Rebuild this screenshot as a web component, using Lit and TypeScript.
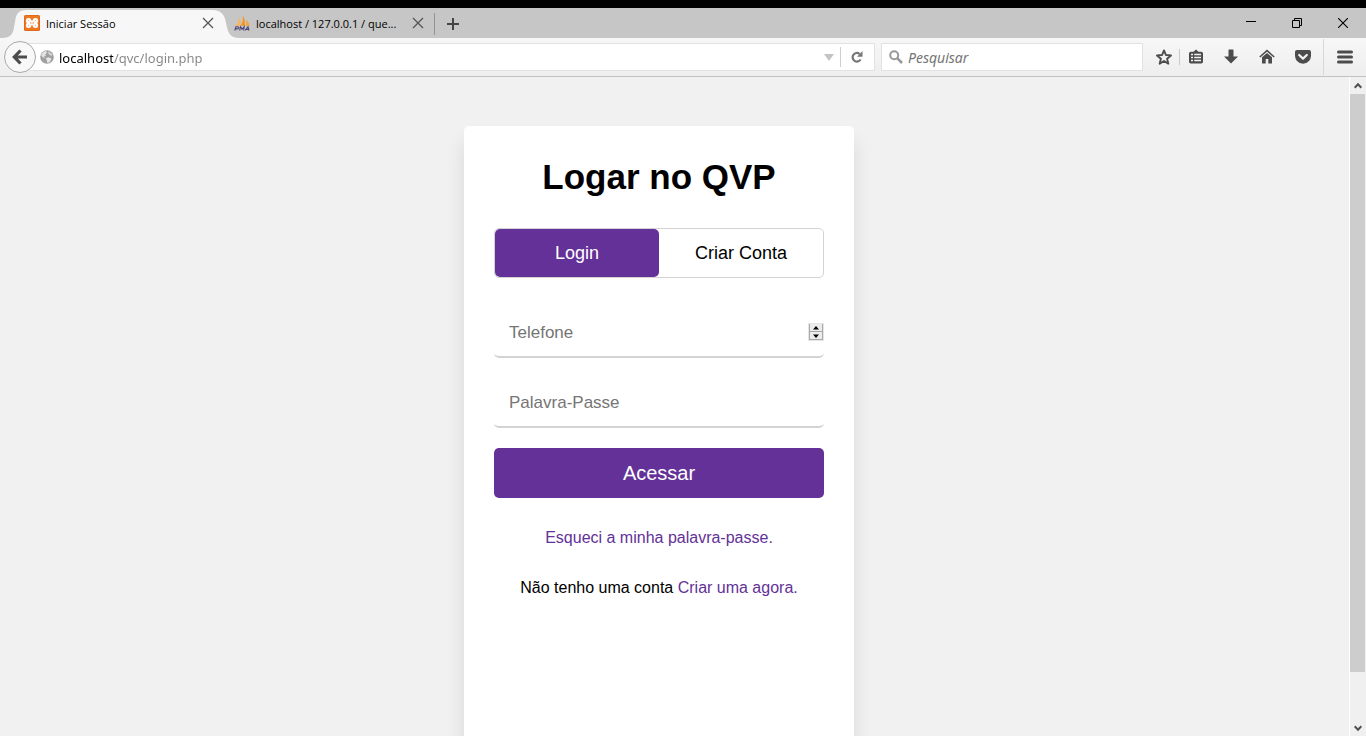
import { LitElement, html, css, svg } from "lit";
import { customElement, state, query } from "lit/decorators.js";

const closeIcon = html`<svg width="12" height="12" viewBox="0 0 12 12" aria-hidden="true">
  <path d="M1 1 11 11M11 1 1 11" fill="none" stroke="#555" stroke-width="1.3" />
</svg>`;

const xamppIcon = html`<svg width="16" height="16" viewBox="0 0 16 16" aria-hidden="true">
  <rect width="16" height="16" rx="1.500" fill="#e0691c" />
  <rect x="1" y="1" width="14" height="14" rx="1" fill="#f07820" />
  <path
    d="M5 7.300H4.600A1.600 1.600 0 1 1 6.200 5.500Q6.300 6.600 7.300 6.600H8.700Q9.700 6.600 9.800 5.500A1.600 1.600 0 1 1 11.400 7.300L11 8 11.400 8.700A1.600 1.600 0 1 1 9.800 10.500Q9.700 9.400 8.700 9.400H7.300Q6.300 9.400 6.200 10.500A1.600 1.600 0 1 1 4.600 8.700L5 8Z"
    fill="none"
    stroke="#fff"
    stroke-width="2.300"
    stroke-linejoin="round"
  />
</svg>`;

const pmaIcon = html`<svg width="16" height="16" viewBox="0 0 16 16" aria-hidden="true">
  <path d="M1.500 10.800Q5 7 6 1.500Q7 6 6.400 10.800Z" fill="#f9b45c" />
  <path d="M6.800 10.800Q9.500 6 9 .5Q11.500 5 11.200 10.800Z" fill="#f7941d" />
  <path d="M11.800 10.800Q12.800 7.500 12.200 4.500Q15 7.500 15.500 10.800Z" fill="#f9a33a" />
  <path
    d="M.8 15.500 1.900 11.700H3.800Q5.200 11.900 4.600 13.100Q4.200 13.900 3.200 13.900H1.500M5.600 15.500 6.600 11.700 8 14.200 10.200 11.700 9.600 15.500M11 15.500 14 11.700 15 15.500M12.200 14.400H14.600"
    fill="none"
    stroke="#4a4878"
    stroke-width="1.1"
  />
</svg>`;

const globeIcon = html`<svg width="14" height="14" viewBox="0 0 14 14" aria-hidden="true">
  <circle cx="7" cy="7" r="6.800" fill="#a0a0a0" />
  <path d="M2 3.200Q4 1 6.200 1L7 2.800 5.400 4.200 6 5.500 4.200 6.200 5 8 3.400 7.600 1.200 5.800Z" fill="#e2e2e2" />
  <path d="M8.500 1.200 12.300 4.200 11.500 6 9.200 4.800 8.200 3Z" fill="#d6d6d6" />
  <path d="M6 8 9 7.200 11.500 9 9.500 12.200 7.500 13 6.800 10.500Z" fill="#e6e6e6" />
</svg>`;

const tools = [
  {
    name: "Adicionar aos favoritos",
    icon: svg`<path d="M8 1.400 9.900 6 15 6.400 11.100 9.700 12.300 14.700 8 12 3.700 14.700 4.900 9.700 1 6.400 6.100 6Z" fill="none" stroke="#4c4c4c" stroke-width="1.900" stroke-linejoin="round"/>`,
  },
  {
    name: "Mostrar favoritos",
    icon: svg`<path d="M5.500 2.800 8 .6 10.500 2.800H13.200Q15 2.800 15 4.600V12.700Q15 14.500 13.200 14.500H2.800Q1 14.500 1 12.700V4.600Q1 2.800 2.800 2.800Z" fill="#4c4c4c"/>
      <path d="M3 5.500H5M6.200 5.500H13M3 8.500H5M6.200 8.500H13M3 11.500H5M6.200 11.500H13" stroke="#f3f3f3" stroke-width="1.600"/>`,
  },
  {
    name: "Transferências",
    icon: svg`<path d="M5.500 1Q5.500 .5 6 .5H10Q10.500 .5 10.500 1V7.500H15L8 14.500 1 7.500H5.500Z" fill="#4c4c4c"/>`,
  },
  {
    name: "Página inicial",
    icon: svg`<path d="M.8 8 8 1.600 15.200 8" fill="none" stroke="#4c4c4c" stroke-width="1.500"/>
      <path d="M3 8.300 8 4 13 8.300V14.500H9.300V10H6.700V14.500H3Z" fill="#4c4c4c"/>`,
  },
  {
    name: "Pocket",
    icon: svg`<path d="M2 1H14Q16 1 16 3V7Q15.500 14 8 14.700Q.5 14 0 7V3Q0 1 2 1Z" fill="#4c4c4c"/>
      <path d="M4.200 6 8 9.600 11.800 6" fill="none" stroke="#f3f3f3" stroke-width="2.200" stroke-linecap="round" stroke-linejoin="round"/>`,
  },
];

@customElement("browser-chrome")
class BrowserChrome extends LitElement {
  static styles = css`
    :host {
      display: block;
      font-family: "Noto Sans", "Open Sans", sans-serif;
      color: #000;
    }
    button {
      display: grid;
      place-items: center;
      box-sizing: border-box;
      margin: 0;
      padding: 0;
      border: 0;
      background: none;
      font: inherit;
    }
    .edge {
      height: 8px;
      background: #000;
    }
    .strip {
      display: flex;
      height: 30px;
      background: #c6c6c6;
    }
    .tab {
      display: flex;
      align-items: center;
      box-sizing: border-box;
      gap: 6px;
      font-family: "Open Sans", sans-serif;
      white-space: nowrap;
    }
    .title {
      flex: 1;
      min-width: 0;
      overflow: hidden;
      text-overflow: ellipsis;
      font-size: 11px;
    }
    .active {
      position: relative;
      width: 228px;
      padding: 0 14px 0 24px;
    }
    .shape {
      position: absolute;
      inset: 0;
      z-index: 0;
    }
    .active > :not(.shape) {
      position: relative;
    }
    .other {
      width: 206px;
      padding: 0 10px 0 6px;
    }
    .plus {
      width: 37px;
      margin: 5px 0 3px;
      border-left: 1px solid #939393;
    }
    .window {
      display: flex;
      margin-left: auto;
    }
    .window button {
      width: 46px;
    }
    .bar {
      display: flex;
      align-items: center;
      box-sizing: border-box;
      height: 39px;
      padding-left: 4px;
      border-bottom: 1px solid #c1c3c1;
      background: linear-gradient(#f7f7f7, #eeeeee);
    }
    .back {
      flex: none;
      width: 32px;
      height: 32px;
      border: 1px solid #a9a9a9;
      border-radius: 50%;
      background: #f8f8f8;
      z-index: 1;
    }
    .field {
      display: flex;
      align-items: center;
      box-sizing: border-box;
      height: 28px;
      border: 1px solid #e2e2e2;
      background: #fff;
    }
    .address {
      flex: 1;
      margin-left: -14px;
      padding-left: 17px;
    }
    .search {
      flex: 0 1 262px;
      margin: 0 10px 0 6px;
      padding-left: 7px;
    }
    input {
      flex: 1;
      min-width: 0;
      margin: 0 0 0 5px;
      padding: 2px 0 0;
      border: 0;
      outline: 0;
      background: none;
      font: 13px/20px "Noto Sans", sans-serif;
    }
    .url {
      color: #000;
      background: linear-gradient(90deg, #000 54px, #858585 54px);
      -webkit-background-clip: text;
      background-clip: text;
      -webkit-text-fill-color: transparent;
    }
    .search input {
      font-style: italic;
      font-size: 14px;
    }
    .search input::placeholder {
      color: #757575;
      opacity: 1;
    }
    .history {
      width: 22px;
    }
    .reload {
      width: 34px;
      height: 20px;
      padding-right: 2px;
      border-left: 1px solid #cfcfcf;
    }
    .tools {
      display: flex;
      align-items: center;
    }
    .tools button {
      width: 36px;
      height: 16px;
    }
    .tools .first {
      width: 27px;
      padding-right: 4px;
      border-right: 1px solid #cacaca;
    }
    .tools .second {
      width: 33px;
      padding-right: 2px;
    }
    .menu {
      width: 43px;
      height: 36px;
      margin-left: 2px;
      border-left: 1px solid #d8d8d8;
    }
  `;

  render() {
    return html`
      <div class="edge"></div>
      <div class="strip">
        <div class="tab active">
          <svg class="shape" width="248" height="30" viewBox="0 0 248 30" aria-hidden="true">
            <path d="M0 30C14 30 13 24 15 14C16 6 18 2 27 2H212C222 2 225 8 226 15C228 24 229 30 240 30Z" fill="#f7f7f7" />
          </svg>
          ${xamppIcon}
          <span class="title">Iniciar Sessão</span>
          <button aria-label="Fechar separador">${closeIcon}</button>
        </div>
        <div class="tab other">
          ${pmaIcon}
          <span class="title">localhost / 127.0.0.1 / que...</span>
          <button aria-label="Fechar separador">${closeIcon}</button>
        </div>
        <button class="plus" aria-label="Novo separador">
          <svg width="12" height="12" viewBox="0 0 12 12"><path d="M6 0V12M0 6H12" stroke="#444" stroke-width="2" /></svg>
        </button>
        <div class="window">
          <button aria-label="Minimizar">
            <svg width="10" height="10" viewBox="0 0 10 10"><path d="M0 3.500H10" stroke="#000" /></svg>
          </button>
          <button aria-label="Restaurar">
            <svg width="10" height="10" viewBox="0 0 10 10">
              <path d="M.5 2.500H7.500V9.500H.5ZM2.500 2.500V.5H9.500V7.500H7.500" fill="none" stroke="#000" />
            </svg>
          </button>
          <button aria-label="Fechar">
            <svg width="10" height="10" viewBox="0 0 10 10"><path d="M0 0 10 10M10 0 0 10" stroke="#000" stroke-width="1.100" /></svg>
          </button>
        </div>
      </div>
      <div class="bar">
        <button class="back" aria-label="Recuar">
          <svg width="16" height="16" viewBox="0 0 16 16">
            <path d="M8.500 1.500 2.300 8 8.500 14.500M2.500 8H15" fill="none" stroke="#4c4c4c" stroke-width="3.200" />
          </svg>
        </button>
        <div class="field address">
          ${globeIcon}
          <input class="url" aria-label="Endereço" .value=${"localhost/qvc/login.php"} />
          <button class="history" aria-label="Histórico">
            <svg width="10" height="7" viewBox="0 0 10 7"><path d="M0 0H10L5 7Z" fill="#c4c4c4" /></svg>
          </button>
          <button class="reload" aria-label="Recarregar">
            <svg width="12" height="12" viewBox="0 0 12 12">
              <path d="M9.600 8.500A4.300 4.300 0 1 1 8.500 2.800" fill="none" stroke="#777" stroke-width="2.200" />
              <path d="M11.500 0V5.700H6Z" fill="#777" />
            </svg>
          </button>
        </div>
        <div class="field search">
          <svg width="14" height="14" viewBox="0 0 14 14" aria-hidden="true">
            <circle cx="5.200" cy="5.200" r="4" fill="none" stroke="#999" stroke-width="2" />
            <path d="M8.200 8.200 13 13" stroke="#999" stroke-width="2.600" />
          </svg>
          <input type="text" aria-label="Pesquisar" placeholder="Pesquisar" />
        </div>
        <div class="tools">
          ${tools.map(
            (tool, i) => html`<button class=${["first", "second"][i] ?? ""} aria-label=${tool.name}>
              <svg width="16" height="16" viewBox="0 0 16 16">${tool.icon}</svg>
            </button>`
          )}
        </div>
        <button class="menu" aria-label="Menu">
          <svg width="16" height="14" viewBox="0 0 16 14">
            <path d="M1.500 2H14.500M1.500 7H14.500M1.500 12H14.500" stroke="#4c4c4c" stroke-width="3" stroke-linecap="round" />
          </svg>
        </button>
      </div>
    `;
  }
}

@customElement("login-card")
class LoginCard extends LitElement {
  static styles = css`
    :host {
      display: block;
      box-sizing: border-box;
      width: 390px;
      max-width: 100%;
      padding: 30px;
      border-radius: 5px;
      background: #fff;
      box-shadow: 0 15px 20px rgba(0, 0, 0, 0.1);
      font-family: "Liberation Sans", Arial, sans-serif;
      color: #000;
    }
    h1 {
      margin: 0;
      font-size: 35px;
      line-height: 42px;
      text-align: center;
    }
    .switch {
      display: grid;
      grid-template-columns: 1fr 1fr;
      box-sizing: border-box;
      height: 50px;
      margin: 30px 0 0;
      padding: 0;
      border: 1px solid lightgrey;
      border-radius: 5px;
    }
    .choice {
      display: grid;
      place-items: center;
      border-radius: 5px;
      font-size: 18px;
      line-height: 24px;
      cursor: pointer;
    }
    .choice input {
      position: absolute;
      opacity: 0;
      pointer-events: none;
    }
    .choice:has(:checked) {
      background: #643198;
      color: #fff;
    }
    form {
      display: grid;
      gap: 20px;
      padding-top: 30px;
    }
    .row {
      position: relative;
      display: grid;
    }
    .text {
      box-sizing: border-box;
      width: 100%;
      height: 50px;
      margin: 0;
      padding: 2px 15px 0;
      border: 0 solid lightgrey;
      border-bottom-width: 2px;
      border-radius: 5px;
      outline: 0;
      background: #fff;
      font: 17px/24px "Liberation Sans", Arial, sans-serif;
      appearance: textfield;
    }
    .text::placeholder {
      color: #757575;
      opacity: 1;
    }
    .text::-webkit-inner-spin-button {
      display: none;
    }
    .spin {
      position: absolute;
      top: 16px;
      right: 1px;
      display: grid;
      outline: 1px solid #e6e6e6;
    }
    .spin button {
      display: grid;
      place-items: center;
      box-sizing: border-box;
      width: 14px;
      height: 8px;
      margin: 0;
      padding: 0;
      border: 1px solid #a8a8a8;
      border-top: 0;
      background: #ececec;
    }
    .submit {
      height: 50px;
      margin: 0;
      padding: 0;
      border: 0;
      border-radius: 5px;
      background: #643198;
      color: #fff;
      font: 20px/24px "Liberation Sans", Arial, sans-serif;
    }
    p {
      margin: 10px 0 0;
      font-size: 16px;
      line-height: 20px;
      text-align: center;
    }
    a {
      color: #643198;
      text-decoration: none;
    }
  `;

  @state() mode = "login";
  @query("#phone") phone!: HTMLInputElement;

  render() {
    return html`
      <h1>Logar no QVP</h1>
      <div class="switch" role="radiogroup" aria-label="Modo">
        <label class="choice">
          <input type="radio" name="mode" ?checked=${this.mode === "login"} @change=${() => (this.mode = "login")} />
          <span>Login</span>
        </label>
        <label class="choice">
          <input type="radio" name="mode" ?checked=${this.mode === "signup"} @change=${() => (this.mode = "signup")} />
          <span>Criar Conta</span>
        </label>
      </div>
      <form @submit=${(e: Event) => e.preventDefault()}>
        <div class="row">
          <input class="text" id="phone" type="number" aria-label="Telefone" placeholder="Telefone" />
          <div class="spin">
            <button type="button" aria-label="Aumentar" @click=${() => this.phone.stepUp()}>
              <svg width="6" height="4" viewBox="0 0 6 4"><path d="M3 0 6 3.500H0Z" /></svg>
            </button>
            <button type="button" aria-label="Diminuir" @click=${() => this.phone.stepDown()}>
              <svg width="6" height="4" viewBox="0 0 6 4"><path d="M0 .5H6L3 4Z" /></svg>
            </button>
          </div>
        </div>
        <div class="row">
          <input class="text" type="password" aria-label="Palavra-Passe" placeholder="Palavra-Passe" />
        </div>
        <button class="submit">Acessar</button>
        <p><a href="#recuperar">Esqueci a minha palavra-passe.</a></p>
        <p>Não tenho uma conta <a href="#criar">Criar uma agora.</a></p>
      </form>
    `;
  }
}

@customElement("app-root")
class AppRoot extends LitElement {
  static styles = css`
    :host {
      display: flex;
      flex-direction: column;
      height: 100vh;
      overflow: hidden;
      background: #f1f1f1;
    }
    .view {
      display: flex;
      flex: 1;
      min-height: 0;
    }
    main {
      display: flex;
      flex: 1;
      justify-content: center;
      min-width: 0;
      padding: 49px 31px 0 0;
      overflow: hidden;
    }
    login-card {
      min-height: 800px;
    }
    .scroll {
      display: flex;
      flex-direction: column;
      flex: none;
      width: 15px;
      padding-right: 1px;
      border-left: 1px solid #fff;
      background: #f0f0f0;
    }
    .arrow {
      display: grid;
      place-items: center;
      height: 17px;
    }
    .track {
      display: grid;
      grid-template-rows: 37fr 3fr;
      flex: 1;
    }
    .thumb {
      background: #cdcdcd;
    }
  `;

  render() {
    return html`
      <browser-chrome></browser-chrome>
      <div class="view">
        <main><login-card></login-card></main>
        <div class="scroll" aria-hidden="true">
          <div class="arrow">
            <svg width="8" height="8" viewBox="0 0 8 8"><path d="M.7 5.700 4 2.300 7.300 5.700" fill="none" stroke="#505050" stroke-width="2" /></svg>
          </div>
          <div class="track"><div class="thumb"></div></div>
          <div class="arrow">
            <svg width="8" height="8" viewBox="0 0 8 8"><path d="M.7 2.300 4 5.700 7.300 2.300" fill="none" stroke="#505050" stroke-width="2" /></svg>
          </div>
        </div>
      </div>
    `;
  }
}
